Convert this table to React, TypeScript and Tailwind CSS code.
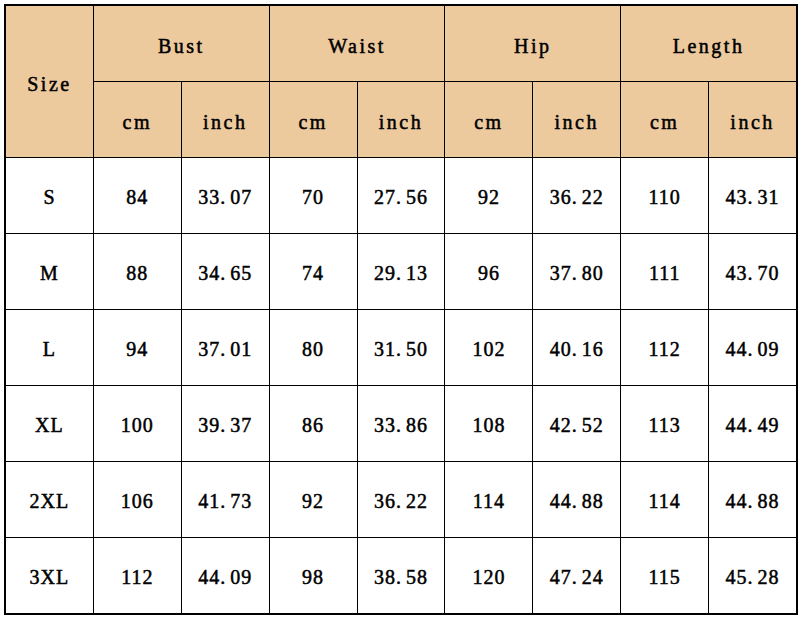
const groups = ['Bust', 'Waist', 'Hip', 'Length'];

const rows: string[][] = [
  ['S', '84', '33.07', '70', '27.56', '92', '36.22', '110', '43.31'],
  ['M', '88', '34.65', '74', '29.13', '96', '37.80', '111', '43.70'],
  ['L', '94', '37.01', '80', '31.50', '102', '40.16', '112', '44.09'],
  ['XL', '100', '39.37', '86', '33.86', '108', '42.52', '113', '44.49'],
  ['2XL', '106', '41.73', '92', '36.22', '114', '44.88', '114', '44.88'],
  ['3XL', '112', '44.09', '98', '38.58', '120', '47.24', '115', '45.28'],
];

const head = 'flex items-center justify-center bg-[#ecca9e] pt-[5px] tracking-[2.5px]';
const cell = 'flex items-center justify-center bg-white pt-[3px] tracking-[1px]';

// SimSun style half-width period takes a full cell, so pad after it
function Num({ v }: { v: string }) {
  const [a, b] = v.split('.');
  if (b === undefined) return <>{v}</>;
  return (
    <>
      {a}
      <span className="mr-[4px]">.</span>
      {b}
    </>
  );
}

export default function App() {
  return (
    <div className="min-h-screen bg-white pt-[4px] pl-[4px]">
      <div
        className="w-[794px] border-2 border-black bg-black text-[20px] font-normal text-black [-webkit-text-stroke:0.5px_#000]"
        style={{ fontFamily: '"Liberation Serif", "Noto Sans CJK SC", serif' }}
      >
        <div className="grid grid-cols-9 auto-rows-[75px] gap-px">
          <div className={`${head} row-span-2`}>Size</div>
          {groups.map((g) => (
            <div key={g} className={`${head} col-span-2`}>{g}</div>
          ))}
          {groups.map((g) => [
            <div key={g + 'cm'} className={head}>cm</div>,
            <div key={g + 'in'} className={head}>inch</div>,
          ])}
          {rows.map((r) =>
            r.map((v, i) => (
              <div key={r[0] + i} className={cell}>
                <Num v={v} />
              </div>
            ))
          )}
        </div>
      </div>
    </div>
  );
}
